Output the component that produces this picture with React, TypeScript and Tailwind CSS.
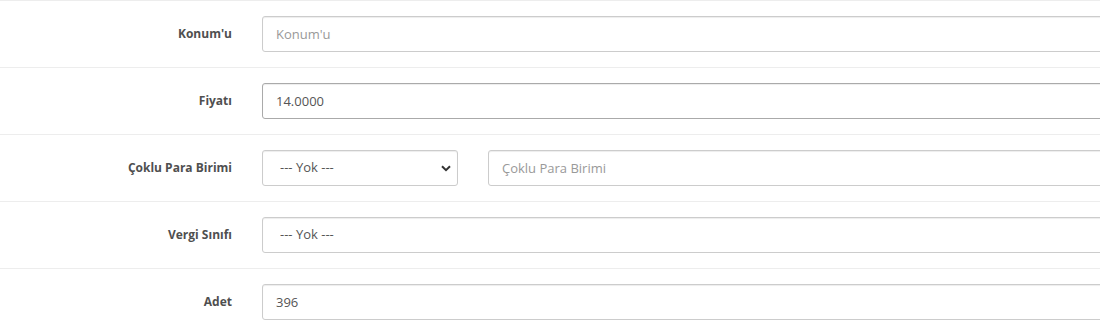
import type { ReactNode } from "react";

function Row({ label, children }: { label: string; children: ReactNode }) {
  return (
    <div className="flex items-center border-t border-[#ededed] py-[15px]">
      <label className="w-[247px] shrink-0 pr-[15px] text-right text-[12px] font-bold text-[#4f4f4f]">
        {label}
      </label>
      <div className="flex flex-1 items-center gap-[30px] pl-[15px]">{children}</div>
    </div>
  );
}

function TextInput({ value, placeholder, dark }: { value?: string; placeholder?: string; dark?: boolean }) {
  return (
    <input
      type="text"
      defaultValue={value}
      placeholder={placeholder}
      className={`h-[36px] flex-1 rounded-[3px] border bg-white px-[13px] text-[13px] text-[#555] shadow-[inset_0_1px_1px_rgba(0,0,0,0.075)] outline-none placeholder:text-[#999] ${
        dark ? "border-[#aaa]" : "border-[#ccc]"
      }`}
    />
  );
}

function Select({ className }: { className: string }) {
  return (
    <div className={`relative ${className}`}>
      <select className="h-[36px] w-full appearance-none rounded-[3px] border border-[#ccc] bg-white pl-[17px] text-[13px] text-[#555] shadow-[inset_0_1px_1px_rgba(0,0,0,0.075)] outline-none">
        <option>--- Yok ---</option>
      </select>
      <svg
        width="10"
        height="7"
        viewBox="0 0 10 7"
        className="pointer-events-none absolute right-[7px] top-[15px]"
      >
        <path d="M1 1.2 5 5.2 9 1.2" fill="none" stroke="#333" strokeWidth="2" />
      </svg>
    </div>
  );
}

export default function App() {
  return (
    <div className="h-[334px] w-full overflow-hidden bg-white font-['Open_Sans',sans-serif]">
      <div className="w-[1200px]">
        <Row label="Konum'u">
          <TextInput placeholder="Konum'u" />
        </Row>
        <Row label="Fiyatı">
          <TextInput value="14.0000" dark />
        </Row>
        <Row label="Çoklu Para Birimi">
          <Select className="w-[196px] shrink-0" />
          <TextInput placeholder="Çoklu Para Birimi" />
        </Row>
        <Row label="Vergi Sınıfı">
          <Select className="flex-1" />
        </Row>
        <Row label="Adet">
          <TextInput value="396" />
        </Row>
      </div>
    </div>
  );
}
